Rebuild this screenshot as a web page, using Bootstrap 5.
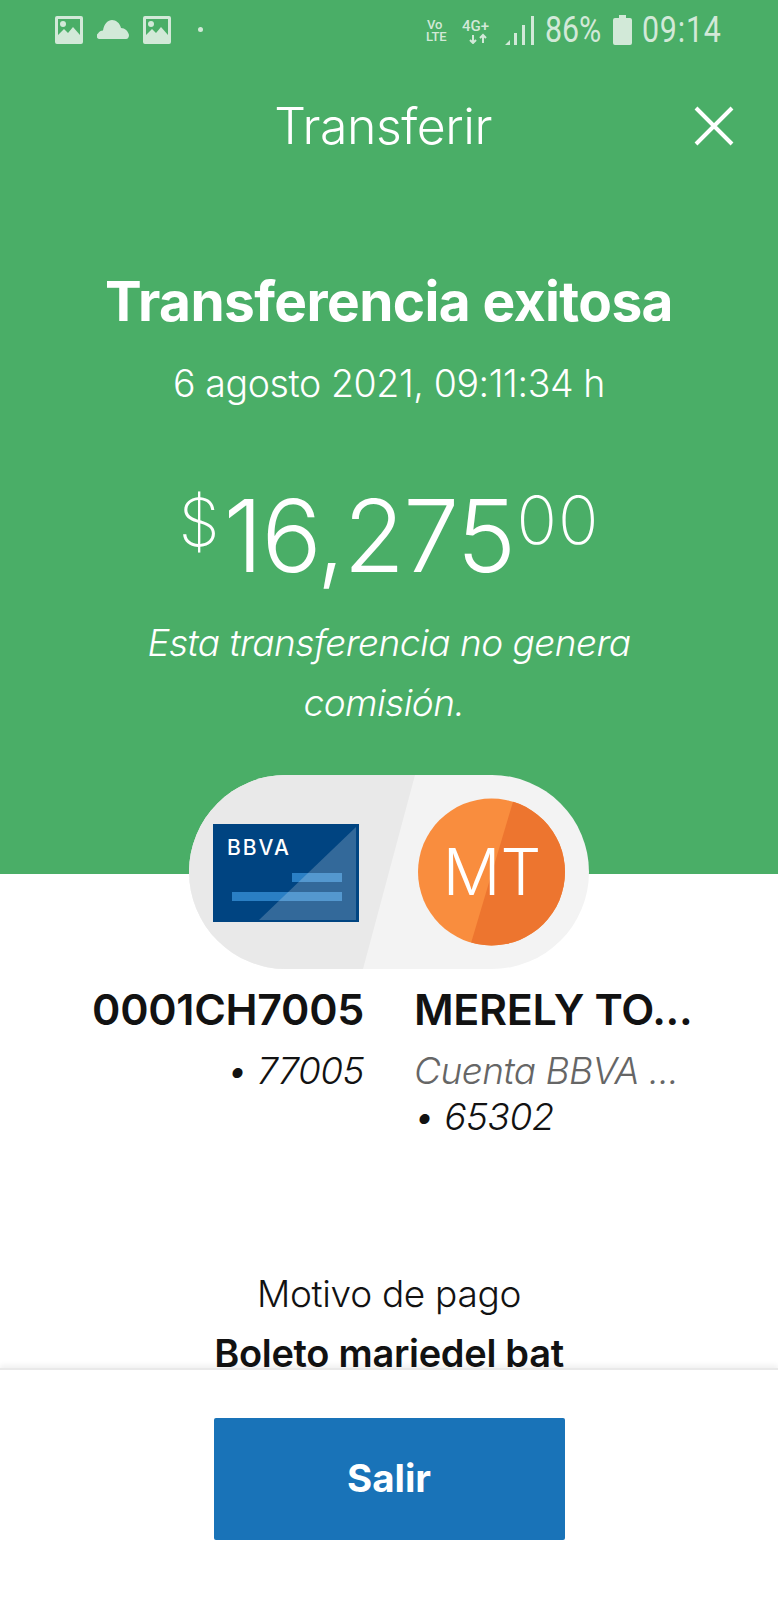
<!DOCTYPE html>
<html lang="es">
<head>
  <meta charset="UTF-8">
  <meta name="viewport" content="width=device-width, initial-scale=1">
  <title>Transferir</title>
  <link href="https://cdn.jsdelivr.net/npm/bootstrap@5.3.2/dist/css/bootstrap.min.css" rel="stylesheet">
  <style>
    body { font-family: "Inter", "Liberation Sans", sans-serif; background: #fff; color: #121212; }
    .screen { height: 1600px; overflow: hidden; }
    .scroll-area { height: 1368px; overflow: hidden; }
    .hero { background: #4aae67; height: 874px; color: #fff; }
    .status-bar { height: 60px; padding: 15px 56px 0 55px; color: #d2e9d8; }
    .status-left { height: 29px; }
    .status-right { height: 30px; }
    .status-txt { font-family: "Roboto", sans-serif; font-size: 37px; line-height: 32px; transform: scaleX(.82); transform-origin: left center; white-space: nowrap; text-align: left; }
    .status-pct { width: 57px; margin: 0 11px 0 11px; }
    .status-time { width: 80px; margin-left: 10px; letter-spacing: 1px; }
    .title-row { height: 76px; margin-top: 28px; padding-right: 44px; }
    .title-txt { font-size: 50px; font-weight: 300; line-height: 1; left: -12px; right: 0; letter-spacing: -.5px; }
    .headline { font-size: 55px; font-weight: 700; line-height: 60px; margin-top: 107px; letter-spacing: -.6px; }
    .when { font-size: 37.500px; font-weight: 300; line-height: 44px; margin-top: 31px; letter-spacing: -.4px; }
    .amount { font-weight: 300; line-height: 110px; margin-top: 75px; font-size: 100px; letter-spacing: -1.500px; }
    .amount sup { line-height: 0; vertical-align: baseline; position: relative; font-weight: 200; }
    .amount-cur { font-size: 66px; top: -.4em; margin-right: 4px; letter-spacing: 0; }
    .amount-cts { font-size: 67px; top: -.42em; margin-left: 2px; letter-spacing: 1px; }
    .note { font-size: 37px; font-weight: 300; font-style: italic; line-height: 60px; margin-top: 22px; letter-spacing: -.5px; }
    .pill-wrap { margin-top: -99px; }
    .names { margin-top: 15px; }
    .side-l { width: 389px; padding-left: 30px; padding-right: 25px; }
    .side-r { width: 389px; padding-left: 25px; padding-right: 40px; }
    .acct-name { font-size: 43px; font-weight: 600; line-height: 50px; white-space: nowrap; letter-spacing: -.3px; }
    .acct-sub { font-size: 37px; font-weight: 300; font-style: italic; line-height: 46px; letter-spacing: -.5px; }
    .acct-first { margin-top: 14px; }
    .acct-gray { color: #666; white-space: nowrap; }
    .reason { margin-top: 125px; }
    .reason-lbl { font-size: 37px; font-weight: 300; line-height: 58px; letter-spacing: -.3px; }
    .reason-val { font-size: 38px; font-weight: 600; line-height: 60px; letter-spacing: -.3px; }
    .foot { height: 232px; border-top: 2px solid #e9e9e9; padding-top: 48px; box-shadow: 0 -3px 5px rgba(0,0,0,.06); background: #fff; position: relative; }
    .btn-salir { width: 351px; height: 122px; background: #1973b8; color: #fff; font-size: 38.500px; font-weight: 700; border-radius: 2px; border: 0; }
    .btn-salir:hover { background: #1973b8; color: #fff; }
    .gap-status { column-gap: 14px; }
    .dot-space { margin-left: 13px; }
    .lte-space { margin-right: 13px; }
    .fourg-space { margin-right: 8px; }
  </style>
</head>
<body>
  <div class="screen d-flex flex-column">
    <div class="scroll-area">
      <div class="hero text-center">
        <div class="status-bar d-flex justify-content-between align-items-start">
          <div class="status-left d-flex align-items-center gap-status">
            <svg width="28" height="28" viewBox="0 0 28 28"><path fill="#d2e9d8" fill-rule="evenodd" d="M2 0h24a2 2 0 0 1 2 2v24a2 2 0 0 1-2 2H2a2 2 0 0 1-2-2V2a2 2 0 0 1 2-2zM3 3v16l6-6 4 4 5-6 7 8V3z"/><circle cx="8" cy="8" r="3" fill="#d2e9d8"/></svg>
            <svg width="32" height="19" viewBox="0 0 32 19"><path fill="#d2e9d8" d="M3 19a3 3 0 0 1-2-5.500c1-2 3-3 5-3C7 4 11 0 15 0s8 3 9 8c4 0 7 3 8 7 0 2-1 4-3 4z"/></svg>
            <svg width="28" height="28" viewBox="0 0 28 28"><path fill="#d2e9d8" fill-rule="evenodd" d="M2 0h24a2 2 0 0 1 2 2v24a2 2 0 0 1-2 2H2a2 2 0 0 1-2-2V2a2 2 0 0 1 2-2zM3 3v16l6-6 4 4 5-6 7 8V3z"/><circle cx="8" cy="8" r="3" fill="#d2e9d8"/></svg>
            <svg width="5" height="5" viewBox="0 0 5 5" class="dot-space"><circle cx="2.500" cy="2.500" r="2.500" fill="#d2e9d8"/></svg>
          </div>
          <div class="status-right d-flex align-items-center">
            <svg width="23" height="25" viewBox="0 0 23 25" class="lte-space"><text x="1" y="11" font-family="Roboto" font-size="13" font-weight="500" fill="#d2e9d8">Vo</text><text x="0" y="23" font-family="Roboto" font-size="13" font-weight="500" fill="#d2e9d8">LTE</text></svg>
            <svg width="35" height="27" viewBox="0 0 35 27" class="fourg-space"><text x="0" y="14" font-family="Roboto" font-size="15" font-weight="500" fill="#d2e9d8">4G+</text><path fill="none" stroke="#d2e9d8" stroke-width="2" d="M11 18v8m-3-3 3 3 3-3M21 26v-8m-3 3 3-3 3 3"/></svg>
            <svg width="29" height="29" viewBox="0 0 29 29"><path fill="#d2e9d8" d="M0 29l5-5v5zM9 17h3v12H9zM17 9h3v20h-3zM26 0h3v29h-3z"/></svg>
            <span class="status-txt status-pct">86%</span>
            <svg width="19" height="30" viewBox="0 0 19 30"><path fill="#d2e9d8" d="M6 0h7v3h4a2 2 0 0 1 2 2v23a2 2 0 0 1-2 2H2a2 2 0 0 1-2-2V5a2 2 0 0 1 2-2h4z"/></svg>
            <span class="status-txt status-time">09:14</span>
          </div>
        </div>
        <div class="title-row position-relative d-flex justify-content-end align-items-center">
          <span class="title-txt position-absolute">Transferir</span>
          <svg width="40" height="40" viewBox="0 0 40 40"><path stroke="#fff" stroke-width="4" d="M2 2l36 36M38 2L2 38"/></svg>
        </div>
        <div class="headline">Transferencia exitosa</div>
        <div class="when">6 agosto 2021, 09:11:34 h</div>
        <div class="amount"><sup class="amount-cur">$</sup>16,275<sup class="amount-cts">00</sup></div>
        <div class="note">Esta transferencia no genera<br>comisión.&nbsp;</div>
      </div>

      <div class="pill-wrap d-flex justify-content-center position-relative">
        <svg width="400" height="194" viewBox="0 0 400 194">
          <defs><clipPath id="pillClip"><rect width="400" height="194" rx="97"/></clipPath><clipPath id="circleClip"><circle cx="302.500" cy="97" r="73.500"/></clipPath></defs>
          <g clip-path="url(#pillClip)">
            <rect width="400" height="194" fill="#f3f3f3"/>
            <path d="M0 0H226L174 194H0z" fill="#e9e9e9"/>
          </g>
          <rect x="24" y="49" width="146" height="98" fill="#004481"/>
          <rect x="103" y="98" width="50" height="9" fill="#2a7fc4"/>
          <rect x="43" y="117" width="110" height="9" fill="#2a7fc4"/>
          <path d="M167 52V145H70z" fill="#fff" opacity=".2"/>
          <text x="38" y="80" font-family="Inter" font-size="21" font-weight="500" fill="#fff" letter-spacing="2">BBVA</text>
          <circle cx="302.500" cy="97" r="73.500" fill="#f98d3e"/>
          <path clip-path="url(#circleClip)" d="M326 20H380V175H280z" fill="#ed752f"/>
          <text x="303" y="120" font-family="Inter" font-size="64" font-weight="300" fill="#fff" text-anchor="middle">MT</text>
        </svg>
      </div>

      <div class="names d-flex">
        <div class="side-l text-end">
          <div class="acct-name">0001CH7005</div>
          <div class="acct-sub acct-first">• 77005</div>
        </div>
        <div class="side-r">
          <div class="acct-name">MERELY TO...</div>
          <div class="acct-sub acct-gray acct-first">Cuenta BBVA ...</div>
          <div class="acct-sub">• 65302</div>
        </div>
      </div>

      <div class="reason text-center">
        <div class="reason-lbl">Motivo de pago</div>
        <div class="reason-val">Boleto mariedel bat</div>
      </div>
    </div>

    <div class="foot d-flex justify-content-center align-items-start">
      <a href="#" class="btn btn-salir d-flex align-items-center justify-content-center">Salir</a>
    </div>
  </div>
  <script src="https://cdn.jsdelivr.net/npm/bootstrap@5.3.2/dist/js/bootstrap.bundle.min.js"></script>
</body>
</html>
